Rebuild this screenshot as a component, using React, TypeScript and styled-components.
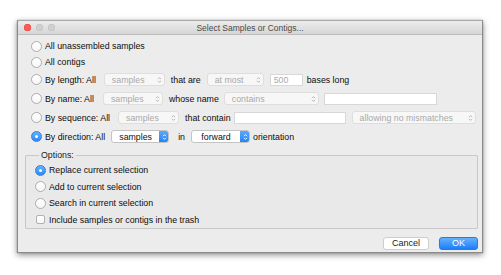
import React from 'react';
import styled, { createGlobalStyle } from 'styled-components';

const GlobalStyle = createGlobalStyle`
  html, body {
    margin: 0;
    padding: 0;
    background: #ffffff;
  }
  body {
    font-family: "Liberation Sans", Arial, sans-serif;
    font-size: 8.8px;
    color: #0d0d0d;
  }
`;

const Page = styled.div`
  width: 501px;
  height: 275px;
  padding: 20px 0 0 17px;
  box-sizing: border-box;
`;

const Window = styled.div`
  width: 466px;
  height: 233px;
  box-sizing: border-box;
  border: 1px solid #8a8a8a;
  border-top-color: #a8a8a8;
  background: #ececec;
  box-shadow: 0 2px 6px rgba(0, 0, 0, 0.45), 0 0 1px rgba(0, 0, 0, 0.3);
  display: flex;
  flex-direction: column;
`;

const TitleBar = styled.div`
  flex: none;
  height: 13px;
  border-bottom: 1px solid #bcbcbc;
  background: linear-gradient(#ececec, #d6d6d6);
  display: flex;
  align-items: center;
  position: relative;
`;

const Lights = styled.div`
  display: flex;
  gap: 5px;
  padding-left: 6px;
`;

const Light = styled.span<{ $color: string; $edge: string }>`
  width: 7px;
  height: 7px;
  border-radius: 50%;
  background: ${(p) => p.$color};
  box-shadow: inset 0 0 0 0.5px ${(p) => p.$edge};
`;

const Title = styled.div`
  position: absolute;
  left: 0;
  right: 0;
  text-align: center;
  font-size: 8.5px;
  color: #4a4a4a;
`;

const Content = styled.div`
  flex: 1;
  min-height: 0;
  display: flex;
  flex-direction: column;
  padding: 3px 4px 3px 13px;
`;

const Row = styled.div<{ $h: number }>`
  flex: none;
  height: ${(p) => p.$h}px;
  display: flex;
  align-items: center;
  white-space: nowrap;
`;

const Radio = styled.span<{ $on?: boolean }>`
  width: 11px;
  height: 11px;
  box-sizing: border-box;
  border-radius: 50%;
  flex: none;
  margin-right: 3px;
  display: flex;
  align-items: center;
  justify-content: center;
  border: 1px solid ${(p) => (p.$on ? '#2f80ea' : '#adadad')};
  background: ${(p) => (p.$on ? 'linear-gradient(#65b1fc, #2c8af6)' : 'linear-gradient(#ffffff, #f6f6f6)')};

  &::after {
    content: '';
    width: 3.5px;
    height: 3.5px;
    border-radius: 50%;
    background: #ffffff;
    display: ${(p) => (p.$on ? 'block' : 'none')};
  }
`;

const Check = styled.span`
  width: 9px;
  height: 9px;
  box-sizing: border-box;
  border: 1px solid #b2b2b2;
  border-radius: 2px;
  background: linear-gradient(#ffffff, #f7f7f7);
  margin: 0 4px 0 1px;
  flex: none;
`;

const Label = styled.span<{ $gap?: number }>`
  margin-right: ${(p) => p.$gap ?? 6}px;
  color: #0d0d0d;
`;

const Popup = styled.span<{ $w: number; $on?: boolean; $gap?: number }>`
  width: ${(p) => p.$w}px;
  height: 13px;
  box-sizing: border-box;
  flex: none;
  display: flex;
  align-items: center;
  margin-right: ${(p) => p.$gap ?? 6}px;
  border-radius: 3px;
  border: 1px solid ${(p) => (p.$on ? '#c4c4c4' : '#dedede')};
  background: ${(p) => (p.$on ? '#ffffff' : '#f7f7f7')};
  color: ${(p) => (p.$on ? '#111111' : '#a9a9a9')};
  overflow: hidden;
`;

const PopupText = styled.span<{ $center?: boolean }>`
  flex: 1;
  padding-left: ${(p) => (p.$center ? 0 : 7)}px;
  text-align: ${(p) => (p.$center ? 'center' : 'left')};
`;

const Stepper = styled.span<{ $on?: boolean }>`
  width: ${(p) => (p.$on ? 10 : 9)}px;
  align-self: stretch;
  display: flex;
  align-items: center;
  justify-content: center;
  margin: ${(p) => (p.$on ? '-1px -1px -1px 0' : '0')};
  border-radius: ${(p) => (p.$on ? '0 3px 3px 0' : '0')};
  background: ${(p) => (p.$on ? 'linear-gradient(#5eacfb, #2381f5)' : 'transparent')};
`;

const Field = styled.span<{ $w: number; $gap?: number }>`
  width: ${(p) => p.$w}px;
  height: 12px;
  box-sizing: border-box;
  flex: none;
  display: flex;
  align-items: center;
  padding-left: 3px;
  margin-right: ${(p) => p.$gap ?? 6}px;
  border: 1px solid #d8d8d8;
  background: #ffffff;
  color: #a9a9a9;
`;

const Group = styled.fieldset`
  flex: none;
  margin: 3px 0 0 -6px;
  padding: 1px 0 0 9px;
  border: 1px solid #c8c8c8;
  border-radius: 1px;
  background: rgba(0, 0, 0, 0.012);
  min-inline-size: 0;
  display: flex;
  flex-direction: column;
`;

const Legend = styled.legend`
  padding: 0 2px;
  margin-left: 4px;
  line-height: 12px;
  color: #222222;
`;

const OptionRow = styled.div`
  height: 16.5px;
  display: flex;
  align-items: center;
  white-space: nowrap;
`;

const Buttons = styled.div`
  display: flex;
  justify-content: flex-end;
  gap: 10px;
  margin-top: 8px;
`;

const Button = styled.button<{ $w: number; $primary?: boolean }>`
  width: ${(p) => p.$w}px;
  height: 13px;
  padding: 0;
  box-sizing: border-box;
  border-radius: 3px;
  font-family: "Liberation Sans", Arial, sans-serif;
  font-size: 9px;
  line-height: 11px;
  border: 1px solid ${(p) => (p.$primary ? '#2679e8' : '#cdcdcd')};
  background: ${(p) => (p.$primary ? 'linear-gradient(#65b1fd, #1b7ff6)' : '#ffffff')};
  color: ${(p) => (p.$primary ? '#ffffff' : '#1a1a1a')};
`;

const Arrows: React.FC<{ color: string }> = ({ color }) => (
  <svg width="5" height="8" viewBox="0 0 5 8">
    <path d="M1 3.2 L2.5 1.6 L4 3.2 M1 4.8 L2.5 6.4 L4 4.8" fill="none" stroke={color} strokeWidth="0.9" />
  </svg>
);

const Select: React.FC<{ w: number; text: string; on?: boolean; gap?: number }> = ({ w, text, on, gap }) => (
  <Popup $w={w} $on={on} $gap={gap}>
    <PopupText $center={on}>{text}</PopupText>
    <Stepper $on={on}>
      <Arrows color={on ? '#ffffff' : '#b0b0b0'} />
    </Stepper>
  </Popup>
);

const App: React.FC = () => {
  return (
    <Page>
      <GlobalStyle />
      <Window>
        <TitleBar>
          <Lights>
            <Light $color="#fc5b57" $edge="#e0443e" />
            <Light $color="#d0d0d0" $edge="#c0c0c0" />
            <Light $color="#d0d0d0" $edge="#c0c0c0" />
          </Lights>
          <Title>Select Samples or Contigs...</Title>
        </TitleBar>
        <Content>
          <Row $h={16}>
            <Radio />
            <Label>All unassembled samples</Label>
          </Row>
          <Row $h={16}>
            <Radio />
            <Label>All contigs</Label>
          </Row>
          <Row $h={19}>
            <Radio />
            <Label $gap={8}>By length: All</Label>
            <Select w={61} text="samples" />
            <Label>that are</Label>
            <Select w={57} text="at most" />
            <Field $w={33} $gap={4}>500</Field>
            <Label>bases long</Label>
          </Row>
          <Row $h={19}>
            <Radio />
            <Label $gap={9}>By name: All</Label>
            <Select w={60} text="samples" />
            <Label $gap={5}>whose name</Label>
            <Select w={95} text="contains" gap={5} />
            <Field $w={113} />
          </Row>
          <Row $h={19}>
            <Radio />
            <Label $gap={8}>By sequence: All</Label>
            <Select w={61} text="samples" />
            <Label $gap={3}>that contain</Label>
            <Field $w={112} />
            <Select w={124} text="allowing no mismatches" />
          </Row>
          <Row $h={19}>
            <Radio $on />
            <Label $gap={6}>By direction: All</Label>
            <Select w={58} text="samples" on gap={9} />
            <Label>in</Label>
            <Select w={59} text="forward" on gap={3} />
            <Label>orientation</Label>
          </Row>
          <Group>
            <Legend>Options:</Legend>
            <OptionRow>
              <Radio $on />
              <Label>Replace current selection</Label>
            </OptionRow>
            <OptionRow>
              <Radio />
              <Label>Add to current selection</Label>
            </OptionRow>
            <OptionRow>
              <Radio />
              <Label>Search in current selection</Label>
            </OptionRow>
            <OptionRow>
              <Check />
              <Label>Include samples or contigs in the trash</Label>
            </OptionRow>
          </Group>
          <Buttons>
            <Button $w={46}>Cancel</Button>
            <Button $w={39} $primary>OK</Button>
          </Buttons>
        </Content>
      </Window>
    </Page>
  );
};

export default App;
